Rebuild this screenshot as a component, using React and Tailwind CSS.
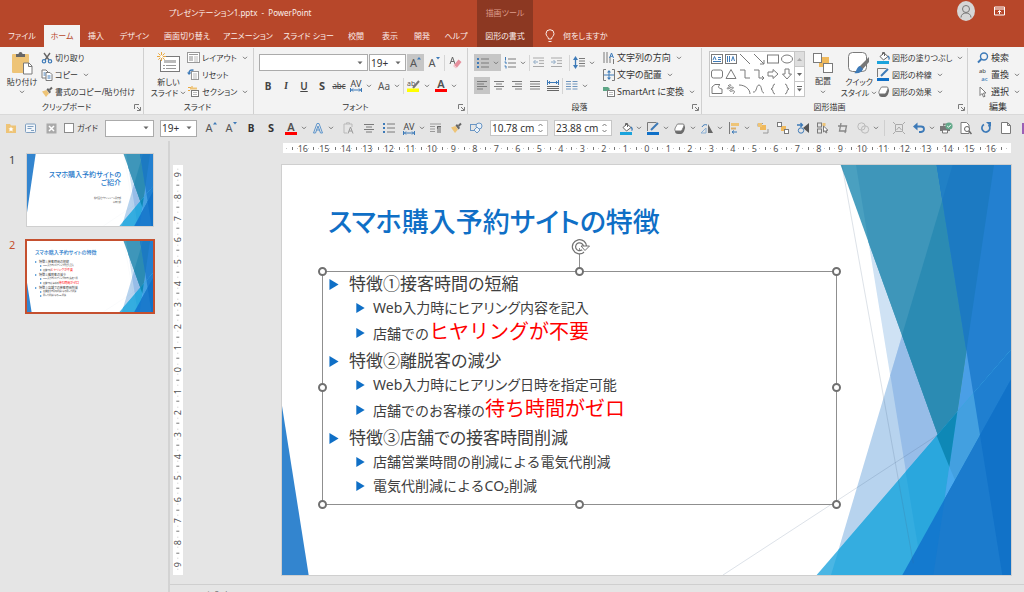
import React from "react";

/* ---------- small drawing helpers ---------- */
const Ic = ({ w = 14, h = 14, children, className = "" }) => (
  <svg width={w} height={h} viewBox={`0 0 ${w} ${h}`} fill="none" aria-hidden="true" className={`shrink-0 ${className}`}>
    {children}
  </svg>
);
const Chev = ({ className = "" }) => (
  <Ic w={6} h={4} className={className}>
    <path d="M1 .8 3 2.8 5 .8" stroke="#777" />
  </Ic>
);
const Tri = () => (
  <Ic w={6} h={4} className="mr-1">
    <path d="M.5 .5h5L3 3.2z" fill="#666" />
  </Ic>
);
const G = "#7a7a7a";
const B = "#3d7ab8";
const Y = "#eec477";

/* ---------- icons ---------- */
const Paste = () => (
  <Ic w={22} h={24}>
    <rect x="1" y="3" width="17" height="19" rx="1" fill={Y} />
    <path d="M5 6V3h2.500a2 2 0 0 1 4 0H14v3z" fill="#666" />
    <path d="M12.500 12h5.500l3 3v8h-8.500z" fill="#fff" stroke={G} />
    <path d="M17.500 12v3.500H21" stroke={G} />
  </Ic>
);
const Cut = () => (
  <Ic w={12} h={12}>
    <path d="M3 1l5 7M9 1L4 8" stroke="#666" strokeWidth="1.400" />
    <circle cx="3" cy="9.300" r="1.700" stroke={B} strokeWidth="1.200" />
    <circle cx="9" cy="9.300" r="1.700" stroke={B} strokeWidth="1.200" />
  </Ic>
);
const Copy = () => (
  <Ic w={12} h={12}>
    <path d="M1 1h4l2 2v6H1z" fill="#fff" stroke={G} />
    <path d="M5 3.500h4l2 2v6H5z" fill="#fff" stroke={G} />
    <path d="M2.500 4h2M2.500 6h2M6.500 7h3M6.500 9h3" stroke={B} />
  </Ic>
);
const Painter = () => (
  <Ic w={12} h={12}>
    <path d="M1 5.500 5.500 4 8 7.500 5 11z" fill={Y} />
    <path d="M5.500 3.500 7 2l3 4-1.500 1.500z" fill="#666" />
    <path d="M8.500 4 11 1.500" stroke="#666" strokeWidth="2" />
  </Ic>
);
const NewSlide = () => (
  <Ic w={24} h={22}>
    <rect x="3.500" y="4.500" width="19" height="15" fill="#fff" stroke={G} />
    <rect x="7" y="8" width="12" height="3" fill="#bbb" />
    <path d="M6 13.500h2M6 16.500h2M9 13.500h10M9 16.500h10" stroke="#999" />
    <circle cx="4.500" cy="4.500" r="3.500" fill="#f3f3f3" />
    <path d="M4.500 0v9M0 4.500h9M1.300 1.300l6.400 6.400M7.700 1.300 1.300 7.700" stroke="#e9a83f" />
    <circle cx="4.500" cy="4.500" r="1.500" fill="#fff" />
  </Ic>
);
const Layout = () => (
  <Ic w={13} h={11}>
    <rect x=".5" y=".5" width="12" height="10" fill="#fff" stroke="#999" />
    <path d="M2 2.500h9" stroke="#999" />
    <rect x="2" y="4" width="4" height="5" fill="#c4c4c4" />
    <path d="M7 5h4M7 7h4M7 9h4" stroke="#bbb" />
  </Ic>
);
const Reset = () => (
  <Ic w={13} h={11}>
    <rect x="4.500" y="2.500" width="7" height="8" fill="#fff" stroke="#999" />
    <path d="M6 5h4M6 7h4M6 9h4" stroke="#bbb" />
    <path d="M6.500 1.200C4 .5 2 1.500 2 4.500" stroke={B} strokeWidth="1.500" />
    <path d="M0 3.500 2 6l2.500-2.500z" fill={B} />
  </Ic>
);
const Section = () => (
  <Ic w={13} h={12}>
    <path d="M1 1.500h3M1 4.500h2M5 0v3" stroke="#e9a83f" />
    <path d="M3 2.500h7" stroke={Y} strokeWidth="2" />
    <rect x="4.500" y="4.500" width="7" height="6" fill="#fff" stroke={G} />
    <path d="M6 6.500h4M6 8.500h4" stroke="#bbb" />
  </Ic>
);
const Lines = ({ x = [1, 1, 1, 1], e = [11, 8, 11, 7], c = G }) => (
  <Ic w={12} h={11}>
    {x.map((a, i) => (
      <path key={i} d={`M${a} ${i * 2.5 + 1.5}H${e[i]}`} stroke={c} />
    ))}
  </Ic>
);
const Bullets = ({ num }) => (
  <Ic w={12} h={12}>
    <path d="M4 2h8M4 6h8M4 10h8" stroke={G} />
    {num ? (
      <path d="M1.500 0v3.500M.5 5h1.500v2M.5 9h1.500v2.500" stroke={B} />
    ) : (
      <path d="M0 2h2M0 6h2M0 10h2" stroke={B} strokeWidth="2" />
    )}
  </Ic>
);
const Indent = ({ right }) => (
  <Ic w={12} h={11}>
    <path d="M0 1h11M6 3.700h5M6 6.400h5M0 9.500h11" stroke="#a9a9a9" />
    <path d={right ? "M0 5h4M2.500 3 4.500 5l-2 2" : "M1 5h4M2.500 3l-2 2 2 2"} stroke="#8da9c4" />
  </Ic>
);
const LineSp = () => (
  <Ic w={12} h={13}>
    <path d="M2.500 2v9" stroke={B} strokeWidth="1.300" />
    <path d="M0 4 2.500 0 5 4zM0 9l2.500 4L5 9z" fill={B} />
    <path d="M6 2.500h6M6 5h6M6 7.500h6M6 10h6" stroke={G} />
  </Ic>
);
const Dist = () => (
  <Ic w={12} h={12}>
    <path d="M.5 0v5M11.500 0v5M1 2.500h10M3 1 1.500 2.500 3 4M9 1l1.500 1.500L9 4" stroke={B} />
    <path d="M0 6.500h12M0 8.500h12M0 10.500h12" stroke="#666" />
  </Ic>
);
const Cols = () => (
  <Ic w={12} h={11}>
    <path d="M0 1.500h5M0 4h5M0 6.500h5M0 9h5M6.500 1.500h5M6.500 4h5M6.500 6.500h5M6.500 9h5" stroke="#6f95bd" />
  </Ic>
);
const TextDir = () => (
  <Ic w={12} h={12}>
    <path d="M1 0v11M4 0v11M7 5v6M10.500 7v5" stroke={G} />
    <path d="M6.500 6 8.500 1l2 5M7.200 4.300h2.600" stroke={B} />
  </Ic>
);
const TextAlign = () => (
  <Ic w={12} h={12}>
    <path d="M3 .5H.5v11H3M9 .5h2.500v11H9" stroke={G} />
    <path d="M6 2v8M1 6h10" stroke={B} />
    <path d="M4 3.500 6 1l2 2.500zM4 8.500 6 11l2-2.500z" fill={B} />
  </Ic>
);
const Smart = () => (
  <Ic w={12} h={11}>
    <path d="M0 1h5l2 2-2 2H0z" fill="#5da585" />
    <rect x="4.500" y="4.500" width="7" height="6" fill="#fff" stroke={G} />
    <path d="M6 6.500h4M6 8.500h4" stroke="#bbb" />
  </Ic>
);
const Arrange = () => (
  <Ic w={22} h={22}>
    <rect x="7" y="5" width="10" height="10" fill="#f0b95b" />
    <rect x="1.500" y="1.500" width="8" height="9" fill="#fff" stroke={G} />
    <rect x="11.500" y="11.500" width="9" height="9" fill="#fff" stroke={G} />
  </Ic>
);
const Quick = () => (
  <Ic w={24} h={24}>
    <rect x="1.500" y="1.500" width="18" height="19" rx="4" fill="#fff" stroke={G} />
    <path d="M22 6v5l-7 8-3-3z" fill="#777" />
    <path d="M13 15l3 3c-1 3-4 5-9 4 3-1 2-6 6-7z" fill={B} />
  </Ic>
);
const Bucket = () => (
  <Ic w={13} h={13}>
    <path d="M3 5.500 7 2l4 3.500L6.500 9z" fill="#fff" stroke="#666" />
    <path d="M5.500 4V1.500h2V5" stroke="#666" />
    <path d="M11 5c1.500 1.500 1.500 3 .5 3.500" stroke={B} strokeWidth="1.300" />
    <path d="M0 10h12v3H0z" fill="#1aa3dc" />
  </Ic>
);
const Pen = () => (
  <Ic w={13} h={13}>
    <path d="M.5 9V.5h9" stroke={G} />
    <path d="M4 8 11 1" stroke={B} strokeWidth="2" />
    <path d="M0 10h12v3H0z" fill="#0f70c8" />
  </Ic>
);
const Effect = () => (
  <Ic w={12} h={11}>
    <path d="M1 8c0 2 1 3 3 3h3c2 0 4-4 4-7l-1-2z" fill="#6b6b6b" />
    <path d="M4 1h5c1.500 0 1 2 .5 3S8 8 6.500 8H2C0 8 1 5 2 3.500S3 1 4 1z" fill="#fff" stroke={G} />
  </Ic>
);
const Search = () => (
  <Ic w={12} h={12}>
    <circle cx="7" cy="4.500" r="3.500" stroke={B} strokeWidth="1.400" />
    <path d="M4.500 7 1 10.500" stroke={B} strokeWidth="2" />
  </Ic>
);
const Replace = () => (
  <span aria-hidden="true" className="flex w-3 shrink-0 flex-col text-[6px] leading-[8px] font-medium">
    <span className="text-[#555]">ab</span>
    <span className="pl-1 text-[#3d7ab8]">ac</span>
  </span>
);
const Cursor = () => (
  <Ic w={12} h={12}>
    <path d="M3 1v8.500l2-2 1.500 3.500 1.500-.7L6.500 7H9z" fill="#fff" stroke={G} />
  </Ic>
);
const Launcher = () => (
  <button aria-label="詳細" className="flex h-2 w-2 items-center justify-center">
    <Ic w={7} h={7}>
      <path d="M.5 5V.5H5M3 3l3 3M6.500 3v3.500H3" stroke={G} />
    </Ic>
  </button>
);
const LetterA = ({ c }) => (
  <span className="flex flex-col items-center">
    <span className="h-[10px] text-[11px] leading-[10px] font-semibold text-[#505050]">A</span>
    <span className={`h-[3px] w-3 ${c}`} />
  </span>
);
const GrowA = ({ down }) => (
  <span className="flex items-start text-[11px] leading-3 text-[#555]">
    A
    <Ic w={4} h={3}>
      <path d={down ? "M0 0h4L2 2.500z" : "M0 2.500h4L2 0z"} fill={B} />
    </Ic>
  </span>
);
const Spacing = () => (
  <span className="flex flex-col items-center">
    <span className="text-[9px] leading-[9px] text-[#444]">AV</span>
    <Ic w={12} h={4}>
      <path d="M.5 0v4M11.500 0v4M1 2h10M3 .5 1.500 2 3 3.500M9 .5 10.500 2 9 3.500" stroke={B} />
    </Ic>
  </span>
);
const Eraser = () => (
  <Ic w={13} h={13}>
    <path d="M1 8 3.500 1 6 8M2 5.500h3" stroke="#666" />
    <path d="M5 9 9.500 3.500 12.500 6 8 11.500z" fill="#e58f9c" />
    <path d="M5 9l3 2.500-1 1L4 10z" fill="#f3c3ca" />
  </Ic>
);
const Highlight = () => (
  <Ic w={13} h={13}>
    <text x="0" y="7" fontSize="7" fill="#555">ab</text>
    <path d="M6 9 12 2" stroke="#777" strokeWidth="2" />
    <path d="M0 9.500h12V13H0z" fill="#ff0" />
  </Ic>
);

/* ---------- ribbon pieces ---------- */
const IconBtn = ({ label, children, w = "w-[18px]", on, dd }) => (
  <button
    aria-label={label}
    className={`flex h-[17px] shrink-0 items-center justify-center ${w} ${on ? "bg-[#c6c6c6]" : ""}`}
  >
    {children}
    {dd && <Chev className="ml-1" />}
  </button>
);
const Row = ({ icon, label, dd }) => (
  <button className="flex h-[17px] items-center gap-[2px] whitespace-nowrap">
    <span className="flex w-[13px] justify-center">{icon}</span>
    {label}
    {dd && <Chev className="ml-[3px]" />}
  </button>
);
const Group = ({ label, width, launch, children }) => (
  <section className={`flex shrink-0 flex-col border-r border-[#d0d0d0] ${width}`}>
    <div className="flex h-[52px] pt-px">{children}</div>
    <div className="flex h-[14px] items-center pr-[2px]">
      <span className="flex-1 text-center">{label}</span>
      {launch && <Launcher />}
    </div>
  </section>
);
const Combo = ({ label, value, width }) => (
  <span className={`flex h-[17px] shrink-0 items-center border border-[#ababab] bg-white ${width}`}>
    <select aria-label={label} className="min-w-0 flex-1 appearance-none bg-transparent pl-px text-[10px] leading-[14px] outline-none">
      <option>{value}</option>
    </select>
    <Tri />
  </span>
);
const Sep = () => <span className="h-4 w-px shrink-0 bg-[#d5d5d5]" />;

const shapes = [
  ["テキスト ボックス", <><rect x=".5" y="1.500" width="11" height="9" stroke={G} /><path d="M2 7 3.500 3.500 5 7M7 4.500h3M7 6.500h3M2 8.500h8" stroke={B} /></>],
  ["縦書き", <><rect x=".5" y="1.500" width="11" height="9" stroke={G} /><path d="M6.500 8 8 3.500 9.500 8M2.500 3v6M4.500 3v6" stroke={B} /></>],
  ["線", <path d="M1 1l10 10" stroke={G} />],
  ["矢印", <path d="M1 1l10 10M11 7v4H7" stroke={G} />],
  ["四角形", <rect x=".5" y="2" width="11" height="8" stroke={G} />],
  ["楕円", <ellipse cx="6" cy="6" rx="5.500" ry="4" stroke={G} />],
  ["角丸", <rect x=".5" y="2" width="11" height="8" rx="2" stroke={G} />],
  ["三角形", <path d="M6 1.500 11 10.500H1z" stroke={G} />],
  ["コネクタ", <path d="M1 2h5v8h5" stroke={G} />],
  ["矢印コネクタ", <path d="M1 2h5v8h5M9 8l2 2-2 2" stroke={G} />],
  ["右矢印", <path d="M1 4h5V1.500L11 6l-5 4.500V8H1z" stroke={G} />],
  ["下矢印", <path d="M4 1h4v5h2.500L6 11 1.500 6H4z" stroke={G} />],
  ["フリーフォーム", <path d="M1 4 4 1.500h5C6 4 8 5.500 11 6v4.500H1z" stroke={G} />],
  ["フリーハンド", <path d="M3 3c3-3 4 0 1 1s-2 3 1 1 5 0 2 1-3 3 0 2 3 1 1 3" stroke={G} />],
  ["円弧", <path d="M0 2c6 0 11 4 11 9" stroke={G} />],
  ["曲線", <path d="M0 9c4 1 3-7 6-7s2 8 5 8" stroke={G} />],
  ["左中かっこ", <path d="M8 1C5 1 7 6 4 6c3 0 1 5 4 5" stroke={G} />],
  ["右中かっこ", <path d="M4 1c3 0 1 5 4 5-3 0-1 5-4 5" stroke={G} />],
];

const tabs = [
  ["ファイル", "w-11"], ["ホーム", "w-9"], ["挿入", "w-8"], ["デザイン", "w-[45px]"], ["画面切り替え", "w-[60px]"],
  ["アニメーション", "w-[62px]"], ["スライド ショー", "w-[59px]"], ["校閲", "w-9"], ["表示", "w-8"], ["開発", "w-8"], ["ヘルプ", "w-9"],
];

const Header = () => (
  <header className="flex h-[47px] bg-[#b7472a] text-[8px] text-[#fbeeea]">
    <div className="flex w-[477px] shrink-0 flex-col">
      <div className="flex h-[25px] items-center pl-[169px]">
        <h1 className="whitespace-pre">プレゼンテーション1.pptx  -  PowerPoint</h1>
      </div>
      <nav className="flex h-[22px]">
        {tabs.map(([t, w], i) => (
          <button
            key={t}
            className={`flex shrink-0 items-center justify-center whitespace-nowrap ${w} ${i === 1 ? "bg-[#f3f3f3] text-[#b7472a]" : ""}`}
          >
            {t}
          </button>
        ))}
      </nav>
    </div>
    <div className="flex w-14 shrink-0 flex-col bg-[#8c3822]">
      <span className="flex h-[25px] items-center justify-center text-[#dd9c8b]">描画ツール</span>
      <button className="flex h-[22px] items-center justify-center whitespace-nowrap">図形の書式</button>
    </div>
    <div className="flex flex-1 items-end">
      <button className="flex h-[22px] items-center gap-2 pl-3">
        <Ic w={10} h={14}>
          <path d="M3.500 10C3.500 8 1 7 1 4.700a4 4 0 0 1 8 0C9 7 6.500 8 6.500 10zM3.500 12.500h3" stroke="#fbeeea" />
        </Ic>
        何をしますか
      </button>
    </div>
    <div className="flex h-[22px] items-center gap-[19px] pr-[19px]">
      <button aria-label="アカウント">
        <Ic w={18} h={20}>
          <ellipse cx="9" cy="10" rx="9" ry="10" fill="#d6d6d6" />
          <circle cx="9" cy="8" r="3.500" stroke="#777" />
          <path d="M4 16.500c0-6 10-6 10 0" stroke="#777" />
        </Ic>
      </button>
      <button aria-label="リボンの表示オプション">
        <Ic w={11} h={10}>
          <path d="M.5 1h10v8H.5zM.5 3h10M5.500 8V5M3.700 6.300 5.500 4.500l1.800 1.800" stroke="#fff" />
        </Ic>
      </button>
    </div>
  </header>
);

const Ribbon = () => (
  <div className="flex h-[68px] overflow-hidden border-b border-[#d9d9d9] bg-[#f3f3f3] pt-px text-[8px] text-[#333]">
    <Group label="クリップボード" width="w-36" launch>
      <button className="flex w-10 shrink-0 flex-col items-center pt-[2px] pl-1 whitespace-nowrap">
        <Paste />
        <span className="leading-[14px]">貼り付け</span>
        <Chev className="mt-px" />
      </button>
      <div className="flex flex-col">
        <Row icon={<Cut />} label="切り取り" />
        <Row icon={<Copy />} label="コピー" dd />
        <Row icon={<Painter />} label="書式のコピー/貼り付け" />
      </div>
    </Group>
    <Group label="スライド" width="w-[110px]">
      <button className="flex w-[43px] shrink-0 flex-col items-center pt-[3px] pl-[6px] whitespace-nowrap">
        <NewSlide />
        <span className="mt-[2px] leading-[11px]">新しい</span>
        <span className="flex items-center gap-[2px] leading-[11px]">スライド<Chev /></span>
      </button>
      <div className="flex flex-col">
        <Row icon={<Layout />} label="レイアウト" dd />
        <Row icon={<Reset />} label="リセット" />
        <Row icon={<Section />} label="セクション" dd />
      </div>
    </Group>
    <Group label="フォント" width="w-[214px]" launch>
      <div className="flex flex-col gap-[6px] pt-[5px] pl-[5px]">
        <div className="flex items-center gap-px">
          <Combo label="フォント名" value="" width="w-[109px]" />
          <Combo label="フォント サイズ" value="19+" width="w-[37px]" />
          <IconBtn label="フォント サイズの拡大" w="w-[17px]" on><GrowA /></IconBtn>
          <IconBtn label="フォント サイズの縮小"><GrowA down /></IconBtn>
          <Sep />
          <IconBtn label="書式のクリア"><Eraser /></IconBtn>
        </div>
        <div className="flex items-center text-[10px] text-[#444]">
          <IconBtn label="太字"><b>B</b></IconBtn>
          <IconBtn label="斜体"><i className="font-serif font-semibold">I</i></IconBtn>
          <IconBtn label="下線"><span className="font-semibold underline">U</span></IconBtn>
          <IconBtn label="影"><b className="text-[11px]">S</b></IconBtn>
          <IconBtn label="取り消し線" w="w-4"><span className="text-[8px] line-through">abc</span></IconBtn>
          <IconBtn label="文字の間隔" w="w-7" dd><Spacing /></IconBtn>
          <IconBtn label="文字種の変換" w="w-7" dd><span className="text-[#555]">Aa</span></IconBtn>
          <Sep />
          <IconBtn label="蛍光ペンの色" w="w-7" dd><Highlight /></IconBtn>
          <IconBtn label="フォントの色" w="w-7" dd><LetterA c="bg-[#f00]" /></IconBtn>
        </div>
      </div>
    </Group>
    <Group label="段落" width="w-[234px]" launch>
      <div className="flex w-[133px] shrink-0 flex-col gap-[6px] pt-[5px] pl-[6px]">
        <div className="flex items-center">
          <IconBtn label="箇条書き" w="w-[27px]" on dd><Bullets /></IconBtn>
          <IconBtn label="段落番号" w="w-7" dd><Bullets num /></IconBtn>
          <Sep />
          <IconBtn label="インデントを減らす"><Indent /></IconBtn>
          <IconBtn label="インデントを増やす"><Indent right /></IconBtn>
          <span className="w-[3px] shrink-0" />
          <Sep />
          <IconBtn label="行間" w="w-7" dd><LineSp /></IconBtn>
        </div>
        <div className="flex items-center">
          <IconBtn label="左揃え" w="w-4" on><Lines /></IconBtn>
          <IconBtn label="中央揃え"><Lines x={[1, 3, 1, 3]} e={[11, 9, 11, 9]} /></IconBtn>
          <IconBtn label="右揃え"><Lines x={[1, 4, 1, 4]} e={[11, 11, 11, 11]} /></IconBtn>
          <IconBtn label="両端揃え"><Lines e={[11, 11, 11, 11]} /></IconBtn>
          <IconBtn label="均等割り付け"><Dist /></IconBtn>
          <Sep />
          <IconBtn label="段組み" w="w-7" dd><Cols /></IconBtn>
        </div>
      </div>
      <div className="flex flex-col pl-px text-[9px]">
        <Row icon={<TextDir />} label="文字列の方向" dd />
        <Row icon={<TextAlign />} label="文字の配置" dd />
        <Row icon={<Smart />} label="SmartArt に変換" dd />
      </div>
    </Group>
    <Group label="図形描画" width="w-[266px]" launch>
      <div className="mt-[2px] ml-[7px] flex h-[46px] w-24 shrink-0 border border-[#c6c6c6] bg-white">
        <div className="grid flex-1 grid-cols-6 place-items-center">
          {shapes.map(([n, d]) => (
            <button key={n} aria-label={n}><Ic w={12} h={12}>{d}</Ic></button>
          ))}
        </div>
        <div className="flex w-[10px] flex-col border-l border-[#c6c6c6]">
          <button aria-label="上へ" className="flex flex-1 items-center justify-center bg-[#dedede]"><Ic w={5} h={3}><path d="M0 3h5L2.500 0z" fill="#aaa" /></Ic></button>
          <button aria-label="下へ" className="flex flex-1 items-center justify-center border-y border-[#c6c6c6]"><Ic w={5} h={3}><path d="M0 0h5L2.500 3z" fill="#666" /></Ic></button>
          <button aria-label="その他" className="flex flex-1 items-center justify-center"><Ic w={5} h={6}><path d="M0 .5h5" stroke="#666" /><path d="M0 2.500h5l-2.500 3z" fill="#666" /></Ic></button>
        </div>
      </div>
      <button className="flex w-9 shrink-0 flex-col items-center pt-[3px] whitespace-nowrap">
        <Arrange />
        <span className="leading-[14px]">配置</span>
        <Chev className="mt-[2px]" />
      </button>
      <button className="flex w-9 shrink-0 flex-col items-center pt-[2px] whitespace-nowrap">
        <Quick />
        <span className="mt-px leading-[11px]">クイック</span>
        <span className="flex items-center gap-[2px] leading-[11px]">スタイル<Chev /></span>
      </button>
      <div className="flex flex-col">
        <Row icon={<Bucket />} label="図形の塗りつぶし" dd />
        <Row icon={<Pen />} label="図形の枠線" dd />
        <Row icon={<Effect />} label="図形の効果" dd />
      </div>
    </Group>
    <section className="flex shrink-0 flex-col pl-2 text-[9px]">
      <div className="flex h-[52px] flex-col pt-px">
        <Row icon={<Search />} label="検索" />
        <Row icon={<Replace />} label="置換" dd />
        <Row icon={<Cursor />} label="選択" dd />
      </div>
      <div className="flex h-[14px] items-center justify-center">編集</div>
    </section>
  </div>
);

/* ---------- quick access bar ---------- */
const Q = ({ label, children, dd }) => (
  <span className="flex shrink-0 items-center">
    <button aria-label={label} className="flex h-5 w-5 items-center justify-center">{children}</button>
    {dd && <Chev className="mr-px" />}
  </span>
);
const SizeBox = ({ label, value }) => (
  <span className="flex h-4 w-[58px] shrink-0 items-center border border-[#c6c6c6] bg-white">
    <input aria-label={label} defaultValue={value} className="w-[46px] min-w-0 bg-transparent pl-px text-[10px] leading-[14px] outline-none" />
    <Ic w={7} h={12}>
      <path d="M1.500 4 3.500 2l2 2M1.500 8l2 2 2-2" stroke={G} />
    </Ic>
  </span>
);
const QuickBar = () => (
  <div className="flex h-[26px] items-center overflow-hidden bg-[#e5e5e5] pl-px text-[8px] text-[#333]">
    <Q label="お気に入り"><Ic w={12} h={12}><path d="M1 2h4l1 1.500h5V11H1z" fill={Y} /><path d="M6 4.500l.8 1.700 1.800.2-1.300 1.200.4 1.900L6 8.500l-1.700 1 .4-1.900-1.300-1.200 1.800-.2z" fill="#fff" /></Ic></Q>
    <Q label="フォーム"><Ic w={12} h={11}><rect x=".5" y="1" width="10" height="8.500" rx="1" fill="#f2f6fa" stroke="#7f9fc0" /><path d="M2.500 3.500h6M2.500 5.500h4M6 7.500h3" stroke="#7f9fc0" /></Ic></Q>
    <Q label="閉じる"><Ic w={11} h={11}><rect x=".5" y=".5" width="10" height="10" fill="#aaa" /><path d="M3 3l5 5M8 3 3 8" stroke="#fff" strokeWidth="1.500" /></Ic></Q>
    <label className="flex w-[44px] shrink-0 items-center gap-[3px] pl-[3px] whitespace-nowrap">
      <input type="checkbox" className="h-[10px] w-[10px] shrink-0 appearance-none border border-[#8c8c8c] bg-white" />
      ガイド
    </label>
    <span className="flex shrink-0 gap-[6px] pr-1">
      <Combo label="フォント" value="" width="w-[49px]" />
      <Combo label="サイズ" value="19+" width="w-[37px]" />
    </span>
    <Q label="拡大"><GrowA /></Q>
    <Q label="縮小"><GrowA down /></Q>
    <Q label="太字"><b className="text-[10px]">B</b></Q>
    <Q label="影"><b className="text-[11px]">S</b></Q>
    <Q label="文字色" dd><LetterA c="bg-[#f00]" /></Q>
    <Q label="文字の効果" dd><Ic w={12} h={12}><path d="M1.500 11 5 1.500h2L10.500 11h-2L6 4 3.500 11zM4 8h4" stroke="#5f96cc" /></Ic></Q>
    <span className="w-1 shrink-0" />
    <Q label="書式貼り付け"><Ic w={12} h={12}><path d="M1 2h8v3M1 2v9h3M3.500 2V.8h3V2" stroke="#b9b9b9" /><path d="M5 11.500 7.500 5l2.500 6.500M6 9h3" stroke="#999" /></Ic></Q>
    <Q label="中央揃え"><Lines x={[1, 3, 1, 3]} e={[11, 9, 11, 9]} /></Q>
    <Q label="箇条書き"><Bullets /></Q>
    <Q label="文字間隔" dd><Spacing /></Q>
    <Q label="段落"><Ic w={12} h={11}><path d="M0 1h11M0 3.500h5M0 6h5M0 8.500h5" stroke="#999" /><path d="M8 3v7M10 3v7M11 3.500H7.500v2H8" stroke="#666" /></Ic></Q>
    <Q label="書式のコピー"><Painter /></Q>
    <Q label="図形"><Ic w={13} h={12}><rect x=".5" y="2.500" width="6" height="6" stroke="#6a96c4" /><circle cx="9" cy="4" r="3" fill="#eaf1f8" stroke="#6a96c4" /><path d="M7 11 4 8l3-3 3 3z" fill="#eaf1f8" stroke="#6a96c4" /></Ic></Q>
    <span className="flex shrink-0 gap-[6px] px-1">
      <SizeBox label="高さ" value="10.78 cm" />
      <SizeBox label="幅" value="23.88 cm" />
    </span>
    <Q label="塗りつぶし" dd><Bucket /></Q>
    <Q label="枠線" dd><Pen /></Q>
    <Q label="効果" dd><Effect /></Q>
    <Q label="回転" dd><Ic w={13} h={11}><path d="M7 1v9h5z" fill="#666" /><path d="M0 10 5 5v5z" stroke="#8bb0d5" /><path d="M1 4c1-2 3-3 5-2" stroke={B} /></Ic></Q>
    <Q label="配置" dd><Ic w={12} h={12}><path d="M1.500 0v12" stroke={G} /><path d="M3 1h8v3H3z" fill={Y} /><path d="M3 5.500h5v2H3z" fill="#ddb06b" /><path d="M4 10h5M6 8.500 4 10l2 1.500" stroke={B} /></Ic></Q>
    <span className="w-[2px] shrink-0" />
    <Q label="前面へ"><Ic w={12} h={12}><rect x="3" y="3" width="6" height="5" fill="#f0b95b" /><path d="M1 4.500V1.500h5M11 7v4H6" stroke="#999" /><rect x="1" y="1" width="4" height="4" fill={Y} /></Ic></Q>
    <Q label="整列"><Ic w={12} h={12}><rect x="4" y="4" width="5" height="5" fill="#f0b95b" /><rect x=".5" y=".5" width="4" height="4" fill="#fff" stroke={G} /><rect x="7.500" y="7.500" width="4" height="4" fill="#fff" stroke={G} /></Ic></Q>
    <Q label="反転"><Ic w={13} h={12}><path d="M12 1v10L6 6z" fill="#555" /><circle cx="4" cy="8.500" r="2.700" stroke={B} /><path d="M0 3h5M3.500 1 5.500 3l-2 2" stroke={B} strokeWidth="1.300" /></Ic></Q>
    <Q label="選択"><Ic w={12} h={12}><rect x=".5" y="1" width="4" height="4" stroke={G} /><rect x="5.500" y="1" width="3" height="3" fill={Y} /><rect x=".5" y="7" width="4" height="4" stroke={G} /><path d="M6.500 4v6l1.500-1.300 1 2.300 1-.5-1-2.200h2z" fill="#fff" stroke={G} /></Ic></Q>
    <Q label="トリミング"><Ic w={12} h={12}><path d="M4 1 2.500 9h7M1 4h8.500L8 11" stroke="#888" strokeWidth="1.300" /></Ic></Q>
    <Q label="図形の結合" dd><Ic w={13} h={12}><circle cx="4.500" cy="4.500" r="3.700" stroke="#bbb" /><circle cx="8" cy="7.500" r="3.700" stroke="#bbb" /></Ic></Q>
    <span className="mx-1 h-4 w-px shrink-0 bg-[#cfcfcf]" />
    <Q label="サイズ"><Ic w={12} h={12}><path d="M2.500 2.500h7v7h-7zM0 0l2 2M12 0l-2 2M0 12l2-2M12 12l-2-2M3.500 8 6 5l2.500 3" stroke="#aaa" /></Ic></Q>
    <Q label="元に戻す" dd><Ic w={13} h={12}><path d="M3 4.500h5c4 0 4 5 0 5.500H6" stroke={B} strokeWidth="1.800" /><path d="M0 4.500 4.500.5v8z" fill={B} /></Ic></Q>
    <Q label="印刷"><Ic w={13} h={12}><path d="M3 4V1.500h5M0 4h10v5H0z" fill="#777" /><path d="M2.500 8h5v3h-5z" fill="#fff" stroke="#777" /><circle cx="9" cy="4" r="3.600" fill="#63a98a" /><path d="M7.200 4l1.300 1.300 2.400-2.500" stroke="#fff" /></Ic></Q>
    <Q label="印刷プレビュー"><Ic w={12} h={13}><path d="M1 .5h5.500L9 3v8.500H1z" fill="#fff" stroke={G} /><circle cx="7" cy="7" r="2.500" fill="#fff" stroke="#666" /><path d="M9 9l2.500 3" stroke="#666" strokeWidth="1.500" /></Ic></Q>
    <Q label="やり直し"><Ic w={12} h={12}><path d="M8.500 3A4 4 0 1 1 4 2.500" stroke={B} strokeWidth="1.700" /><path d="M6 0h5v5z" fill={B} /></Ic></Q>
    <Q label="新規"><Ic w={10} h={12}><path d="M.5.5h6l3 3v8h-9zM6.500.5v3h3" fill="#fff" stroke={G} /></Ic></Q>
    <button aria-label="保存" className="ml-[6px] h-[11px] w-[11px] shrink-0 bg-[#9b5fb5]" />
  </div>
);

/* ---------- slides ---------- */
const Facets = ({ first }) => (
  <svg viewBox="0 0 2187 1230" preserveAspectRatio="none" className="absolute inset-0 h-full w-full" aria-hidden="true">
    <polygon points={first ? "0,0 150,0 0,1000" : "0,723 80,1230 0,1230"} fill="#3385cf" />
    <g transform="translate(1614 -45)">
      <polygon points="108,45 574,45 574,1275 308,1275" fill="#cfe2f4" />
      <polygon points="398,45 574,45 574,1275 33,1275" fill="#b7d3ee" />
      <polygon points="398,45 574,45 574,1275 308,1275 211,676" fill="#97bde8" />
      <polygon points="522,45 574,45 574,1275 340,1275" fill="#4a9fe6" />
      <polygon points="62,45 522,45 388,950" fill="#4aa0c0" />
      <polygon points="108,45 522,45 388,950 146,278" fill="#3e96ba" />
      <polygon points="398,45 522,45 388,950 246,556" fill="#2b8bb3" />
      <polygon points="350,45 574,45 574,1275 547,1275" fill="#2380d0" />
      <polygon points="350,45 522,45 439,603" fill="#1c7ac2" />
      <polygon points="350,45 398,45 367,150" fill="#2180c5" />
      <polygon points="574,598 574,1275 -10,1275" fill="#4bb6e4" />
      <polygon points="574,598 574,1275 33,1275 56,1199" fill="#34ade0" />
      <polygon points="574,598 574,1275 308,1275 257,965" fill="#2aa7dd" />
      <polygon points="412,785 574,598 574,1275 340,1275" fill="#43a0e0" />
      <polygon points="350,857 412,785 388,950" fill="#0e88b6" />
      <polygon points="388,950 405,990 374,1047" fill="#4aa9ee" />
      <polygon points="460,730 574,598 574,1275 547,1275" fill="#1f7fd0" />
      <polygon points="574,687 574,1275 247,1275" fill="#147acf" />
      <polygon points="374,1047 574,687 574,1275 340,1275" fill="#1b7bcd" />
      <polygon points="480,856 574,687 574,1275 547,1275" fill="#1172c8" />
      <path d="M66 45 280 1240M350 857-291 1275" stroke="#406080" strokeOpacity=".18" strokeWidth="3" />
    </g>
  </svg>
);

const items = [
  { head: "特徴①接客時間の短縮", subs: [["Web入力時にヒアリング内容を記入"], ["店舗での", "ヒヤリングが不要"]] },
  { head: "特徴②離脱客の減少", subs: [["Web入力時にヒアリング日時を指定可能"], ["店舗でのお客様の", "待ち時間がゼロ"]] },
  { head: "特徴③店舗での接客時間削減", subs: [["店舗営業時間の削減による電気代削減"], ["電気代削減によるCO₂削減"]] },
];
const Arrow = ({ w, h }) => (
  <svg width={w} height={h} viewBox="0 0 10 12" className="shrink-0" aria-hidden="true">
    <path d="M0 0 10 6 0 12z" fill="#0f6fc6" />
  </svg>
);
const Outline = () => (
  <ul className="pl-[6px] text-[#404040]">
    {items.map((it, i) => (
      <li key={it.head} className={i ? "pt-1" : ""}>
        <div className="flex h-6 items-center gap-[10px] text-[17px] whitespace-nowrap"><Arrow w={10} h={11} />{it.head}</div>
        <ul className="pl-[27px]">
          {it.subs.map(([a, red]) => (
            <li
              key={a}
              className={`flex items-center gap-2 text-[14px] whitespace-nowrap ${red ? "h-[25px]" : "h-6"} ${a.startsWith("Web") ? "" : "[font-feature-settings:normal]"}`}
            >
              <Arrow w={9} h={10} />
              <span className="leading-[24px]">{a}{red && <span className="text-[20px] text-[#ff0000]">{red}</span>}</span>
            </li>
          ))}
        </ul>
      </li>
    ))}
  </ul>
);
const handles = [
  "-left-[5px] -top-[5px]", "left-1/2 -ml-[5px] -top-[5px]", "-right-[5px] -top-[5px]", "-left-[5px] top-1/2 -mt-[5px]",
  "-right-[5px] top-1/2 -mt-[5px]", "-left-[5px] -bottom-[5px]", "left-1/2 -ml-[5px] -bottom-[5px]", "-right-[5px] -bottom-[5px]",
];
const Slide = () => (
  <article className="relative aspect-[729/410] w-full bg-white outline outline-[#cfcfcf]">
    <Facets />
    <div className="relative pt-9 pr-[174px] pl-10">
      <h2 className="h-[41px] pl-[6px] text-[27px] leading-[41px] font-medium whitespace-nowrap text-[#0f6fc6]">スマホ購入予約サイトの特徴</h2>
      <div className="relative mt-[29px] h-[234px] border border-[#8f8f8f]">
        <Outline />
        <span className="absolute -top-6 left-1/2 -ml-px h-6 w-px bg-[#8f8f8f]" />
        <svg width="20" height="18" viewBox="0 0 20 18" fill="none" className="absolute -top-[34px] left-1/2 -ml-[9px]" aria-hidden="true">
          <path d="M14 9a5.500 5.500 0 1 0-2 4" stroke="#707070" strokeWidth="4.500" />
          <path d="M14 9a5.500 5.500 0 1 0-2 4" stroke="#fff" strokeWidth="2" />
          <path d="M10 8h8.500L14 12.500z" fill="#fff" stroke="#707070" />
        </svg>
        {handles.map((p) => (
          <span key={p} className={`absolute h-[9px] w-[9px] rounded-full border-2 border-[#707070] bg-white ${p}`} />
        ))}
      </div>
    </div>
  </article>
);

const ThumbOne = () => (
  <div className="relative aspect-[126/72] w-[126px] bg-white outline outline-[#cfcfcf]">
    <Facets first />
    <div className="relative pt-[17px] pr-8 text-right">
      <div className="text-[7px] leading-[8px] font-medium whitespace-nowrap text-[#2477c9]">スマホ購入予約サイトの<br />ご紹介</div>
      <div className="pt-[10px] text-[2px] leading-[4px] text-[#555]">株式会社デザインツール開発部<br />山田太郎</div>
    </div>
  </div>
);
const ThumbTwo = () => (
  <div className="relative aspect-[126/71] w-[126px] bg-white">
    <Facets />
    <div className="relative pt-2 pl-[8px]">
      <div className="text-[5px] leading-[6px] font-medium whitespace-nowrap text-[#2477c9]">スマホ購入予約サイトの特徴</div>
      <ul className="pt-1 text-[#404040]">
        {items.map((it) => (
          <li key={it.head}>
            <div className="flex h-[5px] items-center gap-[2px] text-[3px] leading-[4px] whitespace-nowrap"><Arrow w={2} h={2} />{it.head}</div>
            <ul className="pl-[5px]">
              {it.subs.map(([a, red]) => (
                <li key={a} className="flex h-1 items-center gap-px text-[2px] leading-[4px] whitespace-nowrap">
                  <Arrow w={2} h={2} />
                  <span>{a}{red && <span className="text-[3px] text-[#ff0000]">{red}</span>}</span>
                </li>
              ))}
            </ul>
          </li>
        ))}
      </ul>
    </div>
  </div>
);

/* ---------- rulers ---------- */
const marks = (n) => Array.from({ length: n * 2 + 1 }, (_, i) => i - n);
const Mark = ({ q }) =>
  q % 4 === 0 ? <span className="text-[9px] leading-none">{Math.abs(q / 4)}</span>
    : q % 2 === 0 ? <span className="h-[3px] w-px shrink-0 bg-[#777]" />
      : <span className="h-px w-px shrink-0 bg-[#c4c4c4]" />;
const RulerH = () => (
  <div className="flex h-[10px] bg-white px-px text-[#555]">
    {marks(67).map((q) => (
      <span key={q} className="flex w-0 flex-1 items-center justify-center"><Mark q={q} /></span>
    ))}
  </div>
);
const RulerV = () => (
  <div className="flex w-[10px] flex-col bg-white py-[2px] text-[#555]">
    {marks(37).map((q) => (
      <span key={q} className="flex h-0 flex-1 -rotate-90 items-center justify-center"><Mark q={q} /></span>
    ))}
  </div>
);

export default function App() {
  return (
    <div className="flex min-h-screen flex-col overflow-hidden bg-[#e5e5e5] font-['Noto_Sans','Noto_Sans_CJK_JP',sans-serif] text-[9px] leading-[12px] [font-feature-settings:'palt']">
      <Header />
      <Ribbon />
      <QuickBar />
      <div className="flex flex-1">
        <aside className="flex w-[170px] shrink-0 flex-col gap-[13px] border-r-2 border-[#d3d3d3] pt-[13px] text-[11px] leading-[12px] text-[#444]">
          <button className="flex items-start pl-[9px] text-left">
            <span className="w-[18px]">1</span>
            <ThumbOne />
          </button>
          <button className="flex items-start pl-[9px] text-left">
            <span className="w-4 text-[#c5502f]">2</span>
            <span className="border-2 border-[#c5502f]"><ThumbTwo /></span>
          </button>
        </aside>
        <main className="flex min-w-0 flex-1 flex-col">
          <div className="pt-[2px] pr-[13px] pl-[113px]"><RulerH /></div>
          <div className="flex pt-3 pr-[13px] pl-[3px]">
            <RulerV />
            <div className="min-w-0 flex-1 pl-[99px]"><Slide /></div>
          </div>
          <div className="mt-[9px] h-2 overflow-hidden border-t border-[#cfcfcf] pt-[5px] pl-3 text-[#777]">ノートを入力</div>
        </main>
      </div>
    </div>
  );
}
